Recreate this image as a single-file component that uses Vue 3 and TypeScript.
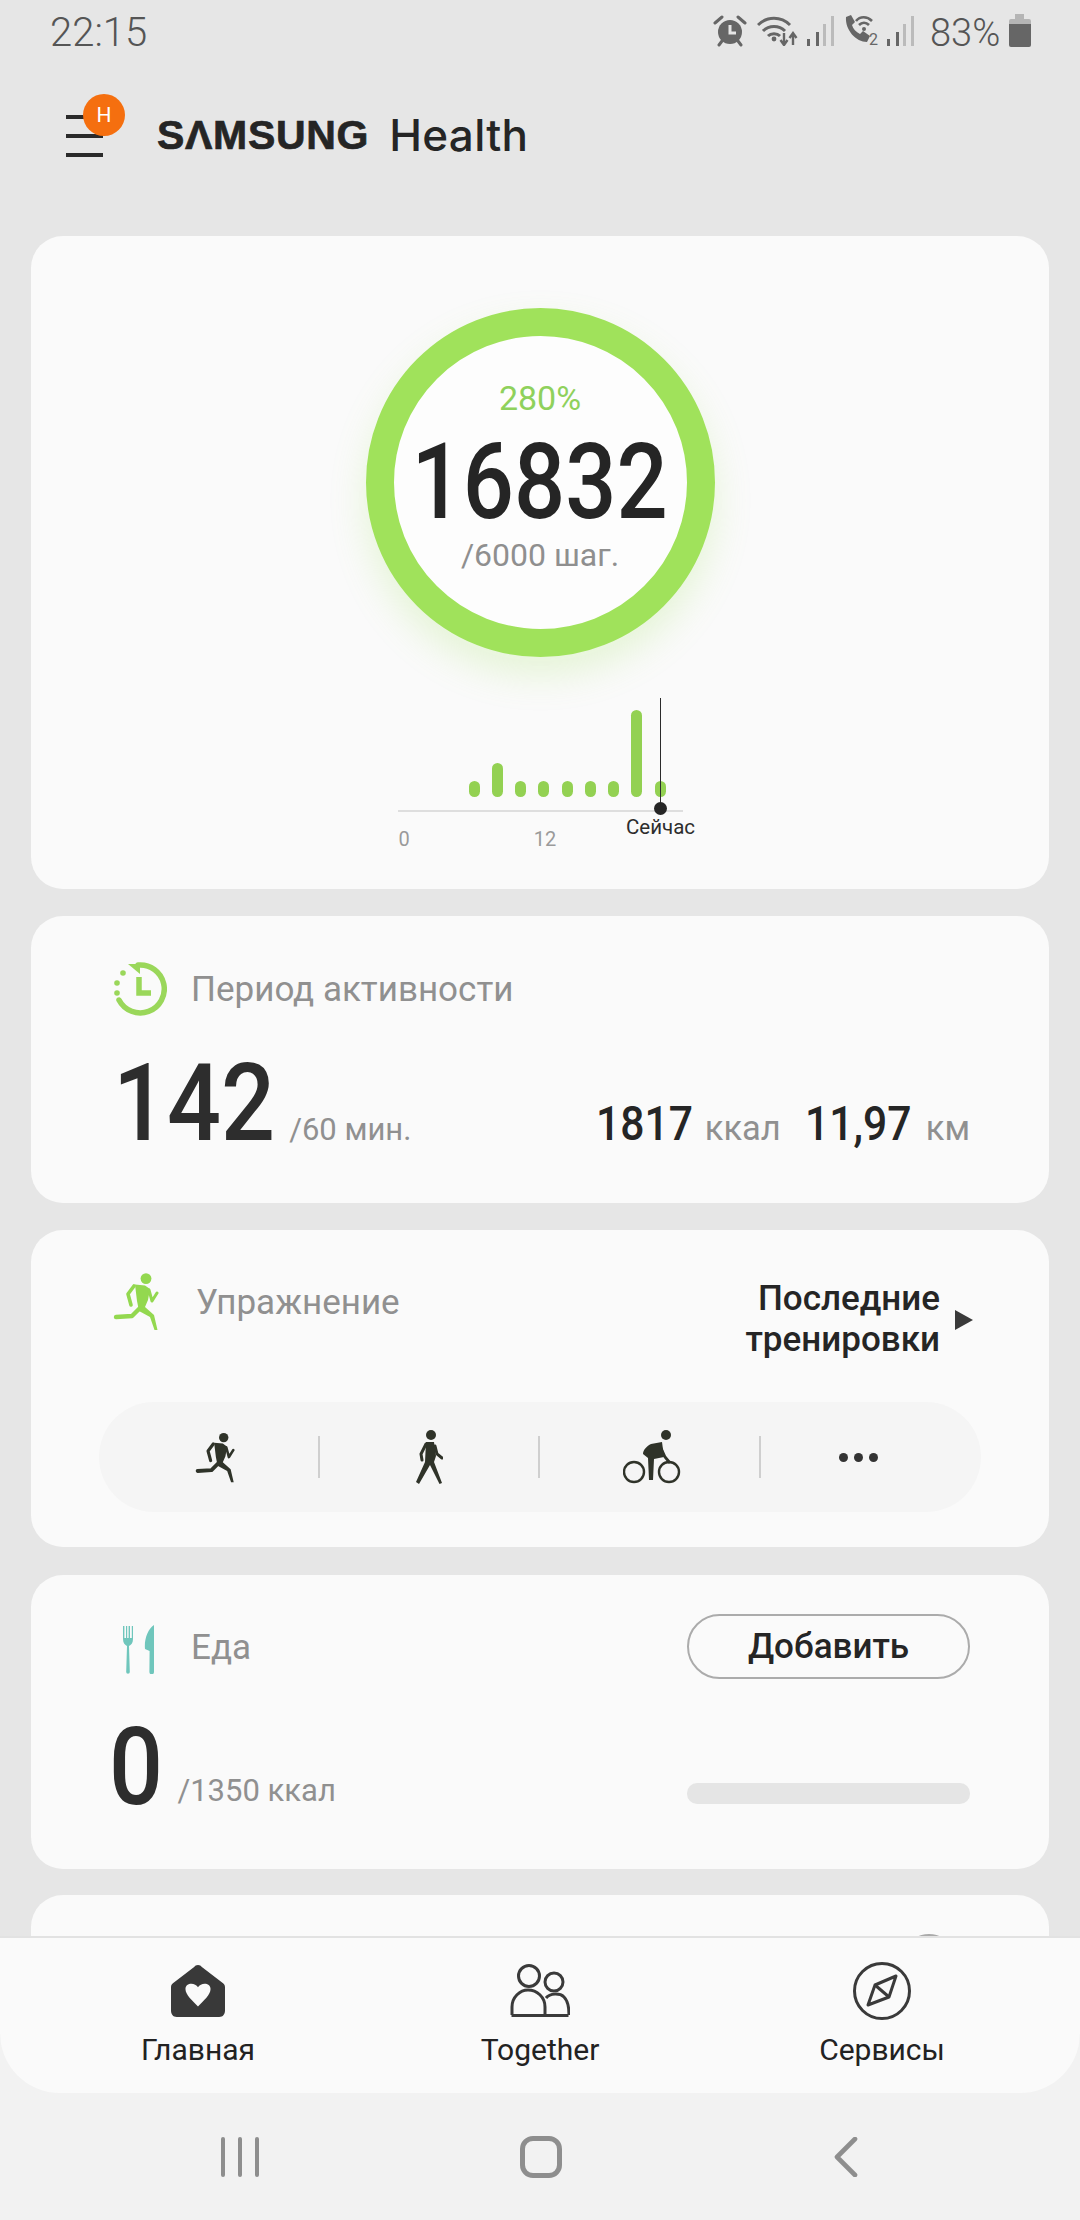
<script setup lang="ts">
const bars: number[] = [16, 34, 16, 16, 16, 16, 16, 87, 16]
</script>

<template>
  <div class="screen">
    <svg width="0" height="0" class="defs">
      <defs>
        <symbol id="runner" viewBox="0 0 46 57">
          <circle cx="33" cy="5.6" r="5.4" fill="currentColor" />
          <path d="M22 11.5 L32 12.5 L37 16 L35 27 L32 34 L41 42 L44.5 57 L41.5 57 L37 44 L26 38 L24 28 Z" fill="currentColor" />
          <path d="M21 13 L15 21 L18 32" fill="none" stroke="currentColor" stroke-width="3.6" stroke-linecap="round" stroke-linejoin="round" />
          <path d="M36 17 L39 28 L44 20" fill="none" stroke="currentColor" stroke-width="3" stroke-linecap="round" stroke-linejoin="round" />
          <path d="M27 35 L19 43 L3 44" fill="none" stroke="currentColor" stroke-width="4.4" stroke-linecap="round" stroke-linejoin="round" />
        </symbol>
      </defs>
    </svg>

    <header class="status">
      <span class="clock">22:15</span>
      <div class="status-right">
        <svg class="st-alarm" width="34" height="33" viewBox="0 0 34 33">
          <circle cx="17" cy="18" r="12" fill="#666" />
          <path d="M17 11v8h6" fill="none" stroke="#e6e6e6" stroke-width="3" />
          <path d="M2 9 L9 3 M32 9 L25 3 M6 31 L9 27 M28 31 L25 27" stroke="#666" stroke-width="3" stroke-linecap="round" />
        </svg>
        <svg class="st-wifi" width="41" height="32" viewBox="0 0 41 32">
          <g fill="none" stroke="#666" stroke-width="3">
            <path d="M1 11 C10 2 24 2 33 11" />
            <path d="M6 17 C12 11 22 11 28 17" />
            <path d="M11 22 C14 19 20 19 23 22" />
          </g>
          <circle cx="17" cy="25" r="2.4" fill="#666" />
          <path d="M27 19v11M23.5 26l3.5 5 3.5-5M36 31V21M32.5 24l3.5-5 3.5 5" fill="none" stroke="#666" stroke-width="2.4" />
        </svg>
        <svg class="st-signal" width="28" height="31" viewBox="0 0 28 31">
          <rect x="0" y="23" width="3" height="7" fill="#666" />
          <rect x="9" y="16" width="3" height="14" fill="#666" />
          <rect x="16" y="8" width="3" height="22" fill="#bbb" />
          <rect x="24" y="0" width="3" height="30" fill="#bbb" />
        </svg>
        <svg class="st-call" width="37" height="36" viewBox="0 0 37 36">
          <path d="M3 3 L8 1 L12 8 L9 11 C10 15 13 18 17 20 L20 17 L27 22 L24 28 C13 28 2 16 3 3 Z" fill="#666" />
          <path d="M13 7 C17 2 24 2 29 7 M16 11 C19 8 23 8 26 11" fill="none" stroke="#666" stroke-width="2.6" />
          <circle cx="21" cy="15" r="2" fill="#666" />
          <text x="26" y="31" class="st-two">2</text>
        </svg>
        <svg class="st-signal2" width="28" height="31" viewBox="0 0 28 31">
          <rect x="0" y="23" width="3" height="7" fill="#666" />
          <rect x="9" y="16" width="3" height="14" fill="#666" />
          <rect x="16" y="8" width="3" height="22" fill="#bbb" />
          <rect x="24" y="0" width="3" height="30" fill="#bbb" />
        </svg>
        <span class="pct">83%</span>
        <svg class="st-batt" width="22" height="33" viewBox="0 0 22 33">
          <path d="M6 0h9v5h5a2 2 0 0 1 2 2v5H0V7a2 2 0 0 1 2-2h4z" fill="#b5b5b5" />
          <path d="M0 10h22v21a2 2 0 0 1-2 2H2a2 2 0 0 1-2-2z" fill="#666" />
        </svg>
      </div>
    </header>

    <div class="appbar">
      <div class="menu">
        <i></i><i></i><i></i>
        <span class="badge">H</span>
      </div>
      <div class="logo"><span class="samsung">SΛMSUNG</span><span class="health">Health</span></div>
    </div>

    <main class="feed">
      <section class="card steps">
        <div class="ring">
          <span class="percent">280%</span>
          <span class="count">16832</span>
          <span class="goal">/6000 шаг.</span>
        </div>
        <div class="chart">
          <div class="bars">
            <i v-for="(h, i) in bars" :key="i" :style="{ height: h + 'px' }"></i>
          </div>
          <div class="axis"></div>
          <div class="ticks"><span class="t0">0</span><span class="t12">12</span></div>
          <div class="now-line"></div>
          <div class="now-dot"></div>
          <span class="now-label">Сейчас</span>
        </div>
      </section>

      <section class="card active">
        <div class="title-row">
          <svg class="ic-active" width="54" height="54" viewBox="0 0 54 54">
            <path d="M25 3 A24 24 0 1 1 6 38" fill="none" stroke="#9ad75a" stroke-width="5.5" stroke-linecap="round" />
            <path d="M15 2 L27 2 L27 12 Z" fill="#9ad75a" />
            <circle cx="10" cy="11" r="2.8" fill="#9ad75a" />
            <circle cx="4" cy="21" r="2.8" fill="#9ad75a" />
            <circle cx="4" cy="31" r="2.8" fill="#9ad75a" />
            <path d="M26 15 V31 H38" fill="none" stroke="#9ad75a" stroke-width="5.5" />
          </svg>
          <span class="title">Период активности</span>
        </div>
        <div class="metrics">
          <span class="big">142</span>
          <span class="unit after-big">/60 мин.</span>
          <span class="spacer"></span>
          <span class="mid m1">1817</span><span class="unit u1">ккал</span>
          <span class="mid m2">11,97</span><span class="unit u1">км</span>
        </div>
      </section>

      <section class="card exercise">
        <div class="ex-head">
          <svg class="ic-run" width="46" height="57"><use href="#runner" /></svg>
          <span class="title ex-title">Упражнение</span>
          <span class="spacer"></span>
          <span class="recent">Последние<br />тренировки</span>
          <span class="tri"></span>
        </div>
        <div class="pill">
          <div class="pill-cell c1">
            <svg class="dark" width="40" height="51"><use href="#runner" /></svg>
          </div>
          <div class="pill-cell">
            <svg class="dark" width="28" height="54" viewBox="0 0 28 54">
              <circle cx="16" cy="5" r="5" fill="currentColor" />
              <path d="M11 12 L19 12 L21 26 L19 32 L27 53 L24.5 54 L15 35 L4 54 L1 52 L10 32 Z" fill="currentColor" />
              <path d="M11 14 L6 24 L7 30 M20 16 L22 24 L27 28" fill="none" stroke="currentColor" stroke-width="3" stroke-linecap="round" />
            </svg>
          </div>
          <div class="pill-cell c3">
            <svg class="dark" width="58" height="54" viewBox="0 0 58 54">
              <circle cx="43" cy="5" r="5" fill="currentColor" />
              <circle cx="11" cy="42" r="10" fill="none" stroke="currentColor" stroke-width="2.4" />
              <circle cx="46" cy="42" r="10" fill="none" stroke="currentColor" stroke-width="2.4" />
              <path d="M38 18 L42 27 L47 33" fill="none" stroke="currentColor" stroke-width="2.8" />
              <path d="M28 14 L39 12 L41 27 L31 29 L30 50 L26 50 L25 28 L20 24 C20 20 24 16 28 14 Z" fill="currentColor" />
            </svg>
          </div>
          <div class="pill-cell c4">
            <span class="dots"><i></i><i></i><i></i></span>
          </div>
        </div>
      </section>

      <section class="card food">
        <div class="food-head">
          <svg class="ic-food" width="33" height="49" viewBox="0 0 33 49">
            <path d="M1 1v13c0 4 2 6 4 7l-.8 26a1.8 1.8 0 0 0 3.6 0L7 21c2-1 4-3 4-7V1h-1.2v12H8V1H6.6v12H5.2V1H4v12H2.4V1z" fill="#6fc6bc" />
            <path d="M32 0 V47 a2 2 0 0 1-4.6 0 L27.6 26 L23 24 C22 14 26 4 32 0 Z" fill="#6fc6bc" />
          </svg>
          <span class="title food-title">Еда</span>
          <span class="spacer"></span>
          <span class="add">Добавить</span>
        </div>
        <div class="food-row">
          <span class="big zero">0</span>
          <span class="unit after-zero">/1350 ккал</span>
          <span class="spacer"></span>
          <span class="track"></span>
        </div>
      </section>

      <section class="card peek">
        <span class="peek-dot"></span>
      </section>
    </main>

    <div class="dock">
      <nav class="tabs">
        <div class="tab">
          <svg width="54" height="54" viewBox="0 0 56 54">
            <path d="M28 0 C30 0 31 1 32 2 L54 19 C55 20 56 21 56 23 V47 C56 51 54 54 50 54 H6 C2 54 0 51 0 47 V23 C0 21 1 20 2 19 L24 2 C25 1 26 0 28 0 Z" fill="#393939" />
            <path d="M28 43 C22 37 15 31 15 25 C15 18 25 18 28 23 C31 18 41 18 41 25 C41 31 34 37 28 43 Z" fill="#fafafa" />
          </svg>
          <span class="tab-label">Главная</span>
        </div>
        <div class="tab">
          <svg width="60" height="54" viewBox="0 0 60 54" fill="none" stroke="#3a3a3a" stroke-width="3">
            <circle cx="19" cy="12" r="10.5" />
            <circle cx="44" cy="18" r="9" />
            <path d="M2 51 V43 C2 33 10 26 18 26 C27 26 35 33 35 43 V51" />
            <path d="M36 34 C40 29 50 29 54 33 C58 37 59 42 59 51" />
            <path d="M1.5 51.5 H58.5" />
          </svg>
          <span class="tab-label">Together</span>
        </div>
        <div class="tab">
          <svg width="58" height="58" viewBox="0 0 58 58" fill="none" stroke="#3a3a3a" stroke-width="3">
            <circle cx="29" cy="29" r="27.5" />
            <path d="M43 14 L36 35 L15 43 L22 23 Z" stroke-linejoin="round" />
            <path d="M22 23 L36 35" />
          </svg>
          <span class="tab-label">Сервисы</span>
        </div>
      </nav>

      <footer class="sysnav">
        <div class="recents"><i></i><i></i><i></i></div>
        <div class="homebtn"></div>
        <svg class="backbtn" width="24" height="40" viewBox="0 0 24 40">
          <path d="M21 2 L3 20 L21 38" fill="none" stroke="#8e8e8e" stroke-width="4.6" stroke-linecap="round" stroke-linejoin="round" />
        </svg>
      </footer>
    </div>
  </div>
</template>

<style>
html, body { margin: 0; padding: 0; }
</style>

<style scoped>
.screen {
  width: 1080px;
  height: 2220px;
  background: #e6e6e6;
  display: flex;
  flex-direction: column;
  overflow: hidden;
  position: relative;
  font-family: Roboto, "Noto Sans", sans-serif;
  color: #252525;
}
.defs { position: absolute; }
.spacer { flex: 1; }

.status {
  height: 66px;
  flex: none;
  display: flex;
  align-items: flex-start;
  padding: 0 49px 0 50px;
}
.clock {
  font-size: 40px;
  font-weight: 300;
  color: #555;
  line-height: 66px;
}
.status-right {
  margin-left: auto;
  display: flex;
  align-items: flex-start;
  padding-top: 14px;
}
.st-wifi { margin-left: 10px; }
.st-signal { margin-left: 9px; margin-top: 2px; }
.st-call { margin-left: 8px; }
.st-signal2 { margin-left: 7px; margin-top: 2px; }
.st-two { font-size: 16px; fill: #666; font-family: Roboto, sans-serif; }
.pct {
  margin-left: 15px;
  font-size: 38px;
  font-weight: 300;
  color: #555;
  line-height: 38px;
  width: 70px;
}
.st-batt { margin-left: 9px; }

.appbar {
  height: 170px;
  flex: none;
  display: flex;
  padding-left: 66px;
}
.menu {
  position: relative;
  width: 37px;
  display: flex;
  flex-direction: column;
  gap: 15px;
  padding-top: 49px;
}
.menu i {
  display: block;
  height: 4px;
  background: #2a2a2a;
}
.badge {
  position: absolute;
  left: 17px;
  top: 28px;
  width: 42px;
  height: 42px;
  border-radius: 50%;
  background: #f56f0f;
  color: #fff;
  font-size: 21px;
  line-height: 42px;
  text-align: center;
}
.logo {
  margin-left: 54px;
  display: flex;
  align-items: center;
  height: 70px;
  margin-top: 34px;
  color: #252525;
}
.samsung {
  font-family: "Liberation Sans", sans-serif;
  font-weight: 700;
  font-size: 41px;
  letter-spacing: 0.7px;
  -webkit-text-stroke: 0.7px #252525;
}
.health {
  margin-left: 20px;
  font-family: Inter, sans-serif;
  font-weight: 500;
  font-size: 44px;
  letter-spacing: 0.3px;
}

.feed {
  flex: 1;
  min-height: 0;
  display: flex;
  flex-direction: column;
  gap: 27px;
  padding: 0 31px;
  overflow: hidden;
}
.card {
  flex: none;
  background: #fafafa;
  border-radius: 32px;
}

.steps {
  height: 653px;
  display: flex;
  flex-direction: column;
  align-items: center;
  padding-top: 72px;
  box-sizing: border-box;
}
.ring {
  width: 349px;
  height: 349px;
  box-sizing: border-box;
  border: 28px solid #a0e25b;
  border-radius: 50%;
  box-shadow: 0 18px 36px rgba(160, 226, 91, 0.22);
  display: flex;
  flex-direction: column;
  align-items: center;
  background: #fdfdfd;
  flex: none;
}
.percent {
  margin-top: 42px;
  font-size: 34px;
  line-height: 40px;
  color: #8fd15c;
}
.count {
  margin-top: 18px;
  font-size: 106px;
  line-height: 92px;
  font-weight: 500;
  color: #252525;
  transform: scaleX(0.85);
}
.goal {
  margin-top: 8px;
  font-size: 32px;
  line-height: 38px;
  color: #8f8f8f;
}
.chart {
  position: relative;
  width: 285px;
  margin-top: 41px;
  flex: none;
}
.bars {
  height: 99px;
  display: flex;
  align-items: flex-end;
  gap: 12.25px;
  padding-left: 71px;
  box-sizing: border-box;
}
.bars i {
  display: block;
  width: 11px;
  border-radius: 6px;
  background: #93d152;
}
.axis {
  margin-top: 13px;
  height: 2px;
  background: #dedede;
}
.ticks {
  display: flex;
  font-size: 20px;
  color: #9a9a9a;
  margin-top: 15px;
  line-height: 24px;
}
.t0 { margin-left: 1px; }
.t12 { margin-left: 124px; }
.now-line {
  position: absolute;
  left: 262px;
  top: 0;
  height: 110px;
  width: 1.5px;
  background: #2b2b2b;
}
.now-dot {
  position: absolute;
  left: 256px;
  top: 104px;
  width: 13px;
  height: 13px;
  border-radius: 50%;
  background: #252525;
}
.now-label {
  position: absolute;
  left: 228px;
  top: 117px;
  width: 70px;
  text-align: center;
  font-size: 20.5px;
  line-height: 24px;
  color: #2d2d2d;
}

.active {
  height: 287px;
  box-sizing: border-box;
  padding: 46px 79px 0 82px;
}
.title-row {
  display: flex;
  align-items: center;
  height: 54px;
}
.title {
  font-size: 35px;
  color: #909090;
  margin-left: 24px;
}
.metrics {
  display: flex;
  align-items: baseline;
  margin-top: 37px;
}
.big {
  font-size: 108px;
  line-height: 100px;
  font-weight: 500;
  color: #2d2d2d;
  transform: scaleX(0.88);
  transform-origin: left;
}
.unit {
  font-size: 34.5px;
  color: #909090;
}
.after-big { margin-left: -8px; font-size: 31px; }
.mid {
  display: inline-block;
  font-size: 49px;
  font-weight: 500;
  color: #252525;
  transform: scaleX(0.87);
  transform-origin: left;
  white-space: nowrap;
}
.m1 { width: 97px; }
.m2 { width: 109px; margin-left: 24px; }
.u1 { margin-left: 12px; }

.exercise {
  height: 317px;
  box-sizing: border-box;
  padding: 43px 68px 0 68px;
}
.ex-head {
  display: flex;
  align-items: flex-start;
  height: 129px;
  padding-left: 14px;
  padding-right: 8px;
}
.ic-run { color: #93d84f; flex: none; }
.ex-title { margin-left: 37px; margin-top: 9px; }
.recent {
  text-align: right;
  font-size: 35px;
  font-weight: 500;
  line-height: 41px;
  margin-top: 5px;
  color: #252525;
}
.tri {
  margin-left: 15px;
  margin-top: 37px;
  width: 0;
  height: 0;
  border-left: 18px solid #3a3a3a;
  border-top: 10px solid transparent;
  border-bottom: 10px solid transparent;
}
.pill {
  height: 110px;
  background: #f5f5f5;
  border-radius: 55px;
  display: grid;
  grid-template-columns: repeat(4, 1fr);
  align-items: center;
}
.pill-cell {
  height: 42px;
  display: flex;
  align-items: center;
  justify-content: center;
  border-right: 2px solid #cfcfcf;
}
.pill-cell:last-child { border-right: none; }
.c1 { padding-left: 14px; }
.c3 { padding-left: 6px; }
.c4 { padding-right: 24px; }
.dark { color: #2f3329; }
.dots { display: flex; gap: 6px; }
.dots i {
  width: 9px;
  height: 9px;
  border-radius: 50%;
  background: #333;
  display: block;
}

.food {
  height: 294px;
  margin-top: 1px;
  box-sizing: border-box;
  padding: 39px 79px 0 81px;
}
.food-head {
  display: flex;
  align-items: center;
  height: 65px;
}
.ic-food { margin-left: 10px; margin-top: 5px; }
.food-title { margin-left: 36px; margin-top: 2px; }
.add {
  width: 283px;
  height: 65px;
  box-sizing: border-box;
  border: 2px solid #ababab;
  border-radius: 33px;
  font-size: 35px;
  font-weight: 500;
  line-height: 61px;
  text-align: center;
  color: #252525;
}
.food-row {
  display: flex;
  align-items: flex-end;
  margin-top: 41px;
}
.zero { line-height: 94px; margin-left: -3px; }
.after-zero { margin-left: 7px; line-height: 46px; font-size: 31px; }
.track {
  width: 283px;
  height: 21px;
  border-radius: 10px;
  background: #e5e5e5;
  margin-bottom: 10px;
}

.peek {
  height: 200px;
  position: relative;
  margin-top: -1px;
}
.peek-dot {
  position: absolute;
  left: 871px;
  top: 39px;
  width: 54px;
  height: 54px;
  border-radius: 50%;
  border: 2px solid #aaa;
  box-sizing: border-box;
}

.dock {
  flex: none;
  background: #f2f2f2;
  position: relative;
  z-index: 1;
}
.tabs {
  height: 155px;
  background: #fafafa;
  border-radius: 0 0 60px 60px;
  box-shadow: 0 -2px 0 #e2e2e2;
  display: grid;
  grid-template-columns: repeat(3, 342px);
  justify-content: center;
}
.tab {
  display: flex;
  flex-direction: column;
  align-items: center;
  padding-top: 24px;
}
.tab svg { height: 58px; flex: none; }
.tab-label {
  margin-top: 12px;
  font-size: 30px;
  line-height: 36px;
  color: #222;
}

.sysnav {
  height: 127px;
  display: flex;
  align-items: center;
}
.recents {
  margin-left: 221px;
  display: flex;
  gap: 13px;
}
.recents i {
  width: 4px;
  height: 40px;
  background: #8e8e8e;
  border-radius: 2px;
  display: block;
}
.homebtn {
  margin-left: 261px;
  width: 42px;
  height: 42px;
  box-sizing: border-box;
  border: 5px solid #8e8e8e;
  border-radius: 13px;
}
.backbtn { margin-left: 272px; }
</style>
